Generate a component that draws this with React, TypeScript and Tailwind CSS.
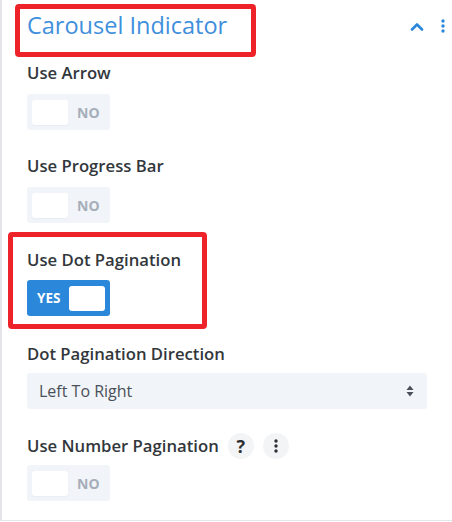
import React from "react";

const font = { fontFamily: '"Open Sans", "Noto Sans", sans-serif' };

function Label({ children }: { children: React.ReactNode }) {
  return (
    <div className="h-[20px] whitespace-nowrap text-[16.7px] leading-[20px] font-semibold text-[#32373c]">
      {children}
    </div>
  );
}

function Toggle({ on = false }: { on?: boolean }) {
  if (on) {
    return (
      <div className="flex h-[36px] w-[83px] items-center rounded-[3px] bg-[#2b87da] pl-[10px] pr-[5px]">
        <span className="text-[13.5px] font-bold text-white">YES</span>
        <span className="ml-auto h-[25px] w-[36px] rounded-[3px] bg-white" />
      </div>
    );
  }
  return (
    <div className="flex h-[36px] w-[83px] items-center rounded-[3px] bg-[#f1f4f8] pl-[5px]">
      <span className="h-[25px] w-[36px] rounded-[3px] bg-white shadow-[0_1px_2px_rgba(0,0,0,0.04)]" />
      <span className="ml-[9px] text-[14px] font-bold text-[#a5aeba]">NO</span>
    </div>
  );
}

function Kebab({ className = "" }: { className?: string }) {
  return (
    <svg width="4" height="14" viewBox="0 0 4 14" className={className}>
      <circle cx="2" cy="2" r="1.7" />
      <circle cx="2" cy="7" r="1.7" />
      <circle cx="2" cy="12" r="1.7" />
    </svg>
  );
}

export default function App() {
  return (
    <div style={font} className="h-[522px] w-[452px] bg-white">
      <div className="h-[521px] border-b border-l-2 border-[#e3e5e8] pl-[25px] pr-[25px]">
        {/* Header */}
        <div className="flex items-start pt-[4px]">
          <div className="-ml-[12px] flex h-[53px] w-[241px] items-start rounded-[4px] border-[5px] border-[#ee2229] pl-[7px] pt-[1px]">
            <span className="whitespace-nowrap text-[23.5px] leading-[30px] text-[#3f8fdc]">Carousel Indicator</span>
          </div>
          <div className="ml-auto mr-[-18px] mt-[15px] flex items-center gap-[17px]">
            <svg width="14" height="9" viewBox="0 0 14 9" fill="none">
              <path d="M2 7.5L7 2.5L12 7.5" stroke="#2b87da" strokeWidth="2.6" strokeLinecap="round" strokeLinejoin="round" />
            </svg>
            <Kebab className="fill-[#2b87da]" />
          </div>
        </div>

        <div className="mt-[6px]">
          <Label>Use Arrow</Label>
          <div className="mt-[11px]">
            <Toggle />
          </div>
        </div>

        <div className="mt-[26px]">
          <Label>Use Progress Bar</Label>
          <div className="mt-[11px]">
            <Toggle />
          </div>
        </div>

        <div className="-ml-[19px] mt-[9px] h-[97px] w-[199px] rounded-[4px] border-[5px] border-[#ee2229] pl-[14px] pt-[13px]">
          <Label>Use Dot Pagination</Label>
          <div className="mt-[10px]">
            <Toggle on />
          </div>
        </div>

        <div className="mt-[15px]">
          <Label>Dot Pagination Direction</Label>
          <div className="mt-[9px] flex h-[36px] w-[400px] items-center rounded-[3px] bg-[#f1f4f8] pl-[12px] pr-[13px]">
            <span className="text-[16px] text-[#4a5059]">Left To Right</span>
            <svg width="8" height="12" viewBox="0 0 8 12" className="ml-auto fill-[#4a5059]">
              <path d="M4 0.5L7.5 5H0.5Z" />
              <path d="M4 11.5L7.5 7H0.5Z" />
            </svg>
          </div>
        </div>

        <div className="mt-[24px]">
          <div className="flex h-[26px] items-center">
            <Label>Use Number Pagination</Label>
            <span className="ml-[9px] flex h-[26px] w-[26px] items-center justify-center rounded-full bg-[#f3f4f6] text-[18px] font-bold text-[#2c3035]">
              ?
            </span>
            <span className="ml-[9px] flex h-[26px] w-[26px] items-center justify-center rounded-full bg-[#f3f4f6]">
              <Kebab className="fill-[#2c3035]" />
            </span>
          </div>
          <div className="mt-[6px]">
            <Toggle />
          </div>
        </div>
      </div>
    </div>
  );
}
